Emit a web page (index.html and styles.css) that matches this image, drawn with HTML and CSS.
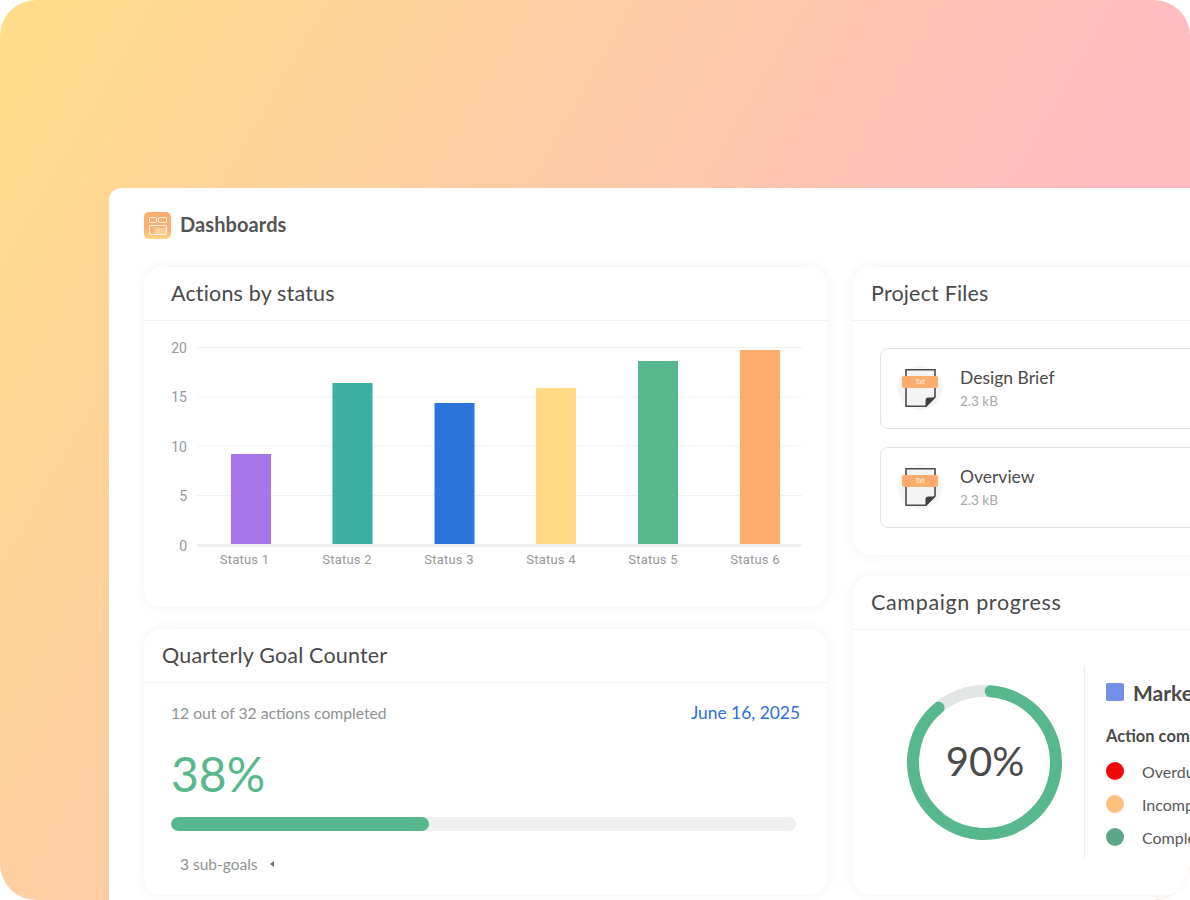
FILE: index.html
```html
<!DOCTYPE html>
<html lang="en">
<head>
<meta charset="utf-8">
<title>Dashboards</title>
<link rel="stylesheet" href="styles.css">
</head>
<body>
<div class="hero">
  <main class="panel">
    <header class="page-head">
      <svg class="page-icon" viewBox="0 0 27 27" width="27" height="27">
        <defs>
          <linearGradient id="ig" x1="0" y1="0" x2="0" y2="1">
            <stop offset="0" stop-color="#fbab6f"/>
            <stop offset="0.7" stop-color="#fcb474"/>
            <stop offset="1" stop-color="#fed783"/>
          </linearGradient>
        </defs>
        <rect width="27" height="27" rx="5" fill="url(#ig)"/>
        <g fill="none" stroke="#fff5e8" stroke-width="1">
          <rect x="5.5" y="5.5" width="7" height="5" rx="0.8"/>
          <rect x="14.5" y="5.5" width="8" height="5" rx="0.8"/>
          <rect x="5.5" y="13.5" width="17" height="9" rx="0.8"/>
        </g>
        <rect x="11" y="16" width="11" height="6" fill="#fed9a6" opacity="0.7"/>
      </svg>
      <h1 class="page-title">Dashboards</h1>
    </header>
    <div class="columns">
      <div class="col">
        <section class="card card-chart">
          <h2 class="card-title">Actions by status</h2>
          <svg class="chart" viewBox="144 321 683 286" width="683" height="286">
            <g class="grid">
              <line x1="197" x2="802" y1="347.5" y2="347.5"/>
              <line x1="197" x2="802" y1="397" y2="397"/>
              <line x1="197" x2="802" y1="446" y2="446"/>
              <line x1="197" x2="802" y1="495.5" y2="495.5"/>
              <line class="axis" x1="197" x2="802" y1="545.5" y2="545.5"/>
            </g>
            <g class="ticks">
              <text x="187" y="352.5">20</text>
              <text x="187" y="402">15</text>
              <text x="187" y="451.5">10</text>
              <text x="187" y="501">5</text>
              <text x="187" y="550.5">0</text>
            </g>
            <rect x="231" y="454" width="40" height="90" fill="#a776eb"/>
            <rect x="332.5" y="383" width="40" height="161" fill="#3bafa3"/>
            <rect x="434.5" y="403" width="40" height="141" fill="#2b74db"/>
            <rect x="536" y="388" width="40" height="156" fill="#ffd983"/>
            <rect x="638" y="361" width="40" height="183" fill="#57b78d"/>
            <rect x="740" y="350" width="40" height="194" fill="#fcad6e"/>
            <g class="labels">
              <text x="244.5" y="564">Status 1</text>
              <text x="347" y="564">Status 2</text>
              <text x="449" y="564">Status 3</text>
              <text x="551" y="564">Status 4</text>
              <text x="653" y="564">Status 5</text>
              <text x="755" y="564">Status 6</text>
            </g>
          </svg>
        </section>
        <section class="card card-goal">
          <h2 class="card-title title-tight">Quarterly Goal Counter</h2>
          <div class="goal-body">
            <div class="goal-meta">
              <span class="goal-count">12 out of 32 actions completed</span>
              <span class="goal-date">June 16, 2025</span>
            </div>
            <div class="goal-pct">38%</div>
            <div class="track"><div class="fill"></div></div>
            <div class="subgoals">3 sub-goals <span class="caret"></span></div>
          </div>
        </section>
      </div>
      <div class="col col-right">
        <section class="card card-files">
          <h2 class="card-title title-tight">Project Files</h2>
          <div class="files">
            <article class="file">
              <svg class="file-icon" viewBox="0 0 44 44" width="44" height="44">
                <circle cx="22" cy="22" r="22" fill="#f5f5f4"/>
                <path d="M8 3.8H37V31L28 40.3H8Z" fill="#f4f4f4" stroke="#4b4b4b" stroke-width="1.6"/>
                <path d="M37.5 31.5L27.5 41V34.5Q27.5 31.5 30.5 31.5Z" fill="#3f3f3f"/>
                <rect x="4" y="10" width="36" height="12" rx="2" fill="#fcad6e"/>
                <text class="txt" x="22" y="18.4">Txt</text>
              </svg>
              <div class="file-info">
                <div class="file-name">Design Brief</div>
                <div class="file-size">2.3 kB</div>
              </div>
            </article>
            <article class="file">
              <svg class="file-icon" viewBox="0 0 44 44" width="44" height="44">
                <circle cx="22" cy="22" r="22" fill="#f5f5f4"/>
                <path d="M8 3.8H37V31L28 40.3H8Z" fill="#f4f4f4" stroke="#4b4b4b" stroke-width="1.6"/>
                <path d="M37.5 31.5L27.5 41V34.5Q27.5 31.5 30.5 31.5Z" fill="#3f3f3f"/>
                <rect x="4" y="10" width="36" height="12" rx="2" fill="#fcad6e"/>
                <text class="txt" x="22" y="18.4">Txt</text>
              </svg>
              <div class="file-info">
                <div class="file-name">Overview</div>
                <div class="file-size">2.3 kB</div>
              </div>
            </article>
          </div>
        </section>
        <section class="card card-progress">
          <h2 class="card-title title-tight title-wide">Campaign progress</h2>
          <div class="progress-body">
            <div class="donut">
              <svg viewBox="0 0 156 156" width="156" height="156">
                <circle class="donut-track" cx="77.5" cy="77.5" r="71.5"/>
                <circle class="donut-value" cx="77.5" cy="77.5" r="71.5" pathLength="360" stroke-dasharray="315 360" transform="rotate(-85 77.5 77.5)"/>
              </svg>
              <span class="donut-label">90%</span>
            </div>
            <div class="legend">
              <div class="legend-head"><span class="swatch"></span><span class="legend-name">Marketing</span></div>
              <div class="legend-sub">Action completion</div>
              <ul class="legend-list">
                <li><span class="dot dot-red"></span>Overdue</li>
                <li><span class="dot dot-orange"></span>Incomplete</li>
                <li><span class="dot dot-green"></span>Completed</li>
              </ul>
            </div>
          </div>
        </section>
      </div>
    </div>
  </main>
</div>
</body>
</html>
```
FILE: styles.css
```css
* { box-sizing: border-box; }
html, body { margin: 0; padding: 0; height: 100%; background: #fff; overflow: hidden; }
body { font-family: "Lato", "Liberation Sans", sans-serif; color: #4a4a4a; }
h1, h2, ul { margin: 0; padding: 0; }

.hero {
  width: 1190px;
  height: 900px;
  border-radius: 36px;
  background: linear-gradient(120deg, #ffdd88 0%, #ffbcc0 70%);
  padding: 188px 0 0 109px;
  overflow: hidden;
}
.panel {
  width: 1081px;
  height: 712px;
  background: #fff;
  border-radius: 12px 0 36px 0;
  padding: 24px 0 0 35px;
  overflow: hidden;
}
.page-head { display: flex; align-items: center; gap: 9px; height: 27px; margin-bottom: 28px; }
.page-icon { display: block; flex: none; }
.page-title { font-size: 20px; line-height: 25px; margin-bottom: 2px; font-weight: 700; color: #555; letter-spacing: 0.1px; }

.columns { display: grid; grid-template-columns: 683px 420px; column-gap: 26px; }
.col { display: flex; flex-direction: column; gap: 22px; }
.col-right { gap: 21px; }

.card {
  background: #fff;
  border-radius: 18px;
  box-shadow: 0 0 12px rgba(60, 80, 70, 0.08);
  overflow: hidden;
}
.card-chart { height: 340px; }
.card-goal { height: 266px; }
.card-files { height: 288px; }
.card-progress { height: 319px; }

.card-title {
  height: 54px;
  padding: 12px 27px 0;
  font-size: 21.5px;
  line-height: 29px;
  font-weight: 400;
  letter-spacing: 0.17px;
  color: #4a4a4a;
  border-bottom: 1px solid #f0f2f1;
}
.title-tight { padding-left: 18px; }
.title-wide { letter-spacing: 0.65px; }

.chart { display: block; }
.grid line { stroke: #f0f2f1; stroke-width: 1; }
.grid .axis { stroke: #edf0ef; stroke-width: 3; }
.ticks text, .labels text { font-family: "Roboto", sans-serif; fill: #96999a; }
.ticks text { font-size: 14px; text-anchor: end; }
.labels text { font-size: 13px; text-anchor: middle; letter-spacing: 0.2px; }

.goal-body { padding: 19px 27px 0; }
.goal-meta { display: flex; justify-content: space-between; align-items: center; font-size: 15.7px; line-height: 22px; }
.goal-count { color: #8e9391; }
.goal-date { color: #2b6fdb; font-size: 17.4px; }
.goal-pct { margin-top: 19px; font-size: 48px; line-height: 62px; font-weight: 400; color: #57b78d; }
.track { margin-top: 12px; width: 625px; height: 14px; border-radius: 7px; background: #eef1f0; overflow: hidden; }
.fill { width: 258px; height: 100%; border-radius: 7px; background: #57b78d; }
.subgoals { margin-top: 22px; padding-left: 9px; display: flex; align-items: center; font-size: 15.5px; line-height: 22px; color: #8e9391; }
.caret { margin-left: 12px; width: 0; height: 0; border-style: solid; border-width: 3.5px 4px 3.5px 0; border-color: transparent #666 transparent transparent; }

.files { padding: 27px 0 0 27px; display: flex; flex-direction: column; gap: 18px; }
.file {
  width: 380px;
  height: 81px;
  border: 1px solid #e3e5e5;
  border-radius: 8px;
  display: flex;
  align-items: center;
  padding: 0 0 1px 17px;
  gap: 18px;
}
.file-icon { display: block; flex: none; }
.txt { font-family: "Roboto", sans-serif; font-size: 7px; fill: #fff3e6; text-anchor: middle; }
.file-name { font-size: 17.5px; line-height: 24px; color: #4a4a4a; }
.file-size { margin-top: 2px; font-size: 13.5px; line-height: 18px; color: #a3a9a7; }

.progress-body { display: flex; padding: 36px 0 0 54px; align-items: flex-start; }
.donut { position: relative; width: 156px; height: 156px; margin-top: 19px; flex: none; }
.donut svg { display: block; }
.donut-track, .donut-value { fill: none; stroke-width: 12; }
.donut-track { stroke: #e2e5e3; }
.donut-value { stroke: #57b78d; stroke-linecap: round; }
.donut-label { position: absolute; inset: 0; padding-bottom: 5px; display: flex; align-items: center; justify-content: center; font-size: 40px; font-weight: 400; color: #4a4a4a; }
.legend {
  margin-left: 21px;
  height: 194px;
  width: 260px;
  flex: none;
  border-left: 1px solid #eef0ef;
  padding: 14px 0 0 21px;
}
.legend-head { display: flex; align-items: center; gap: 9px; height: 24px; }
.swatch { width: 18px; height: 18px; border-radius: 2px; background: #7590eb; flex: none; }
.legend-name { font-size: 21px; font-weight: 700; color: #4a4a4a; }
.legend-sub { margin-top: 22px; font-size: 16.5px; line-height: 20px; font-weight: 700; color: #4a4a4a; }
.legend-list { list-style: none; margin-top: 14px; display: flex; flex-direction: column; gap: 11px; }
.legend-list li { display: flex; align-items: center; gap: 18px; height: 22px; font-size: 16px; color: #5a5a5a; }
.dot { width: 18px; height: 18px; border-radius: 50%; flex: none; }
.dot-red { background: #f10808; }
.dot-orange { background: #fdc07e; }
.dot-green { background: #5ba888; }
```
